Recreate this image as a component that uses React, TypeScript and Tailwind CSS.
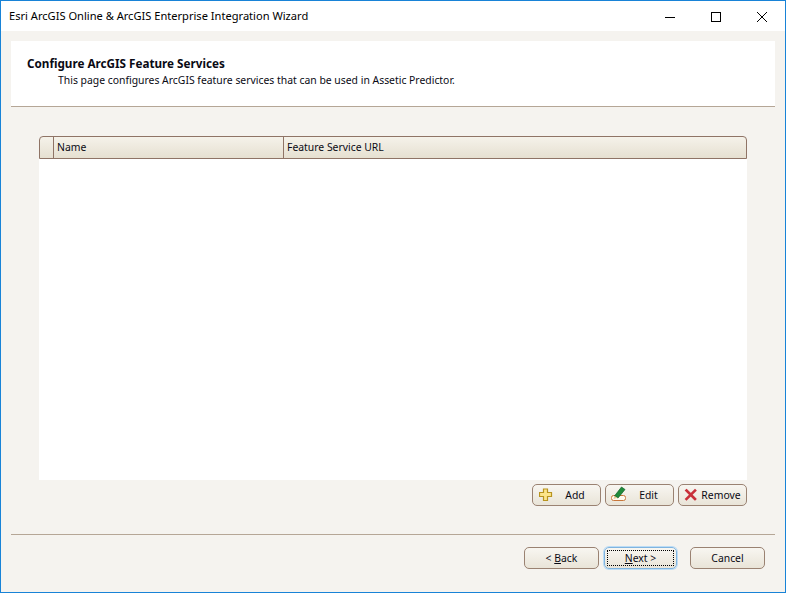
function WizButton({ children, focused, className }: { children: React.ReactNode; focused?: boolean; className: string }) {
  return (
    <button
      type="button"
      className={`relative h-[22px] rounded-[5px] border bg-gradient-to-b from-[#f8f6f1] to-[#e9e4d8] text-[10.400px] leading-none text-[#0a0a14] ${
        focused ? 'border-[#7fb4e0] shadow-[0_0_0_1px_#bcdcf5]' : 'border-[#9a8272]'
      } ${className}`}
    >
      {focused && <span className="absolute inset-[2px] border border-dotted border-black" />}
      {children}
    </button>
  );
}

function PlusIcon() {
  return (
    <svg width="14" height="14" viewBox="0 0 14 14" className="absolute left-[6px] top-[3px]">
      <path d="M4.500 1h4v3.500H12.500v4H8.500v4h-4v-4H.5v-4h4z" fill="#fde58a" stroke="#b8941f" strokeWidth="1.200" />
    </svg>
  );
}

function PencilIcon() {
  return (
    <svg width="16" height="17" viewBox="0 0 16 17" className="absolute left-[5px] top-[0px]">
      <rect x="0.500" y="10.500" width="14" height="5" rx="2" fill="#fdf8ee" stroke="#c8763a" />
      <path d="M3.500 11 10.500 2l3.500 2.500-7 8.500z" fill="#1f8a3a" stroke="#0f5f25" strokeWidth="0.700" />
      <path d="M3.500 11 2.500 14l4-1.200z" fill="#e8c890" />
    </svg>
  );
}

function RemoveIcon() {
  return (
    <svg width="14" height="14" viewBox="0 0 14 14" className="absolute left-[5px] top-[3px]">
      <path d="M2.500 2.500 11 11M11 2.500 2.500 11" stroke="#c9303a" strokeWidth="2.600" strokeLinecap="square" />
    </svg>
  );
}

export default function App() {
  return (
    <div className="flex h-[593px] w-[786px] flex-col overflow-hidden border border-[#1883d7] bg-[#f5f3ef] font-['Noto_Sans',sans-serif] text-[10.400px] text-[#0a0a14]">
      {/* title bar */}
      <div className="flex h-[30px] shrink-0 items-center bg-white pl-[8px] pt-[1px] text-black">
        <span className="flex-1 text-[11.100px]">Esri ArcGIS Online &amp; ArcGIS Enterprise Integration Wizard</span>
        <svg width="10" height="10" viewBox="0 0 10 10" className="mr-[36px]">
          <path d="M0 5.500h10" stroke="#000" />
        </svg>
        <svg width="10" height="10" viewBox="0 0 10 10" className="mr-[36px]">
          <rect x="0.500" y="0.500" width="9" height="9" fill="none" stroke="#000" />
        </svg>
        <svg width="10" height="10" viewBox="0 0 10 10" className="mr-[18px]">
          <path d="M0 0 10 10M10 0 0 10" stroke="#000" />
        </svg>
      </div>

      <div className="flex flex-1 flex-col px-[10px] pt-[10px]">
        {/* header */}
        <div className="h-[66px] shrink-0 border-b border-[#b5a696] bg-white pl-[16px] pt-[14px]">
          <div className="text-[11.700px] font-bold leading-[17px]">Configure ArcGIS Feature Services</div>
          <div className="pl-[31px] leading-[16px]">This page configures ArcGIS feature services that can be used in Assetic Predictor.</div>
        </div>

        {/* table */}
        <div className="mx-[28px] mt-[29px] flex flex-col">
          <div className="flex h-[23px] rounded-t-[4px] border border-[#8f7466] bg-gradient-to-b from-[#f5f2ea] to-[#e6e0d1] leading-[20px]">
            <div className="w-[14px] border-r border-[#8f7466]" />
            <div className="w-[230px] border-r border-[#8f7466] pl-[3px]">Name</div>
            <div className="flex-1 pl-[3px]">Feature Service URL</div>
          </div>
          <div className="h-[321px] bg-white" />
        </div>

        {/* table buttons */}
        <div className="mx-[28px] mt-[4px] flex justify-end gap-[4px]">
          <WizButton className="w-[69px] pl-[17px]"><PlusIcon />Add</WizButton>
          <WizButton className="w-[69px] pl-[18px]"><PencilIcon />Edit</WizButton>
          <WizButton className="w-[69px] pl-[17px]"><RemoveIcon />Remove</WizButton>
        </div>

        {/* footer */}
        <div className="mt-[28px] border-t border-[#b5a696]" />
        <div className="mt-[12px] flex justify-end pr-[10px]">
          <WizButton className="mr-[5px] w-[75px]">&lt; <span className="underline">B</span>ack</WizButton>
          <WizButton focused className="mr-[13px] w-[73px]"><span className="underline">N</span>ext &gt;</WizButton>
          <WizButton className="w-[75px]">Cancel</WizButton>
        </div>
      </div>
    </div>
  );
}
